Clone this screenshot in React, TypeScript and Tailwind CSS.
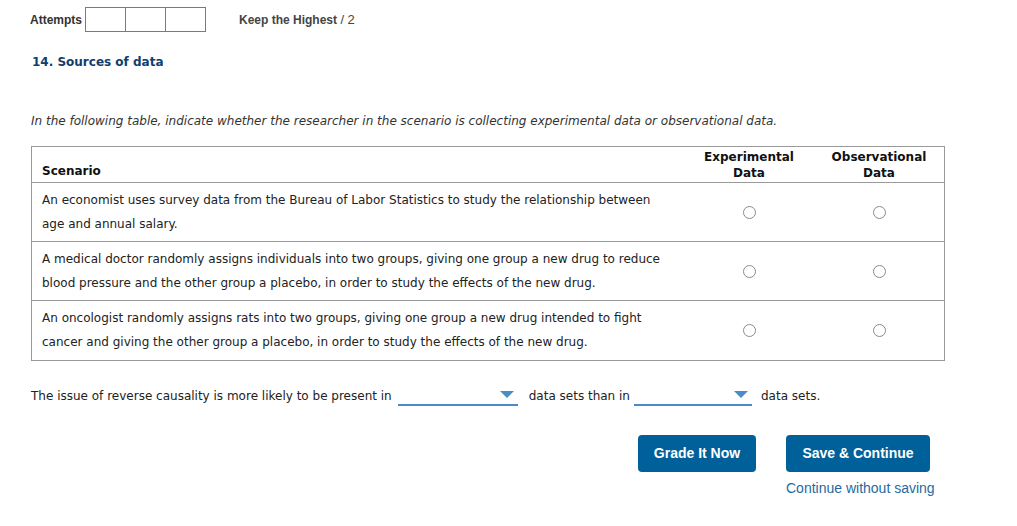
import React from "react";

const rows = [
  [
    "An economist uses survey data from the Bureau of Labor Statistics to study the relationship between",
    "age and annual salary.",
  ],
  [
    "A medical doctor randomly assigns individuals into two groups, giving one group a new drug to reduce",
    "blood pressure and the other group a placebo, in order to study the effects of the new drug.",
  ],
  [
    "An oncologist randomly assigns rats into two groups, giving one group a new drug intended to fight",
    "cancer and giving the other group a placebo, in order to study the effects of the new drug.",
  ],
];

const verdana = "font-['Verdana','DejaVu_Sans',sans-serif]";
const arial = "font-['Arial','Liberation_Sans',sans-serif]";

function Radio() {
  return <span className="inline-block w-[13px] h-[13px] rounded-full border border-[#8a8a8a] bg-white" />;
}

function Dropdown({ className }: { className: string }) {
  return (
    <span className={`inline-flex items-center justify-end h-[20px] border-b-2 border-[#4a8cc6] pr-[4px] ${className}`}>
      <svg width="14" height="8" viewBox="0 0 14 8">
        <path d="M0 0 L14 0 L7 7 Z" fill="#4a8cc6" />
      </svg>
    </span>
  );
}

export default function App() {
  return (
    <div className={`w-[1017px] h-[526px] bg-white text-[#333] ${verdana}`}>
      <div className="flex items-center pl-[30px] pt-[7px]">
        <span className={`${arial} text-[12px] font-bold text-[#333] mr-[3px]`}>Attempts</span>
        <div className="flex">
          <span className="w-[41px] h-[25px] border border-[#7a7a7a]" />
          <span className="w-[40px] h-[25px] border border-l-0 border-[#7a7a7a]" />
          <span className="w-[40px] h-[25px] border border-l-0 border-[#7a7a7a]" />
        </div>
        <span className={`${arial} ml-[33px] text-[12px] font-bold text-[#444]`}>
          Keep the Highest <span className="font-normal text-[13px]">/ 2</span>
        </span>
      </div>

      <div className="pl-[32px] pt-[21px] text-[12px] font-bold text-[#0f3e6e]">14. Sources of data</div>

      <div className="pl-[31px] pt-[41px] text-[12px] italic text-[#333] whitespace-nowrap">
        In the following table, indicate whether the researcher in the scenario is collecting experimental data or observational data.
      </div>

      <div className="ml-[31px] mt-[16px] w-[914px] border border-[#9a9a9a] text-[12px]">
        <div className="flex h-[36px] border-b border-[#9a9a9a] font-bold text-[#111]">
          <div className="flex-1 flex items-end pl-[10px] pb-[3px] leading-[16px]">Scenario</div>
          <div className="w-[130px] flex flex-col items-center justify-center leading-[16px]">
            <span>Experimental</span>
            <span>Data</span>
          </div>
          <div className="w-[130px] flex flex-col items-center justify-center leading-[16px]">
            <span>Observational</span>
            <span>Data</span>
          </div>
        </div>
        {rows.map((r, i) => (
          <div key={i} className={`flex h-[59px] ${i < rows.length - 1 ? "border-b border-[#9a9a9a]" : ""}`}>
            <div className="flex-1 pl-[10px] pt-[5px] leading-[24px] text-[#222] whitespace-nowrap">
              <div>{r[0]}</div>
              <div>{r[1]}</div>
            </div>
            <div className="w-[130px] flex items-center justify-center">
              <Radio />
            </div>
            <div className="w-[130px] flex items-center justify-center">
              <Radio />
            </div>
          </div>
        ))}
      </div>

      <div className="flex items-center pl-[31px] mt-[25px] text-[12px] text-[#222] whitespace-nowrap">
        <span>The issue of reverse causality is more likely to be present in</span>
        <Dropdown className="w-[120px] ml-[6px] mr-[4px]" />
        <span className="ml-[7px]">data sets than in</span>
        <Dropdown className="w-[118px] ml-[4px] mr-[4px]" />
        <span className="ml-[5px]">data sets.</span>
      </div>

      <div className={`flex pl-[638px] mt-[29px] ${arial}`}>
        <button className="w-[118px] h-[37px] rounded-[4px] bg-[#00609a] text-white text-[14px] font-bold">Grade It Now</button>
        <div className="ml-[30px] flex flex-col items-start">
          <button className="w-[144px] h-[37px] rounded-[4px] bg-[#00609a] text-white text-[14px] font-bold">Save &amp; Continue</button>
          <span className="mt-[6px] text-[14px] text-[#1f6aa0] whitespace-nowrap">Continue without saving</span>
        </div>
      </div>
    </div>
  );
}
